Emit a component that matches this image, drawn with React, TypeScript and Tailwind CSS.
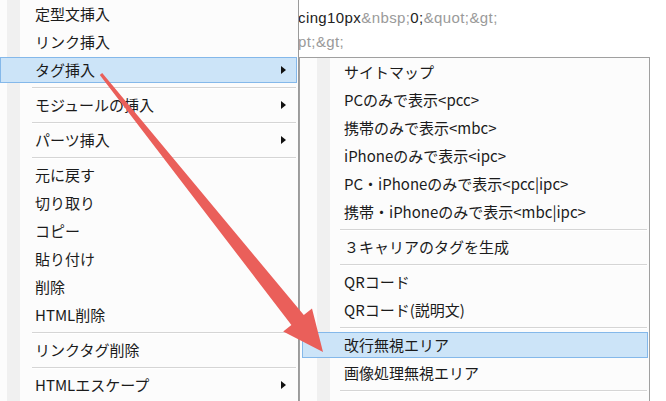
import React from "react";

type Row =
  | { kind: "item"; label: string; sub?: boolean; active?: boolean }
  | { kind: "sep" };

const mainRows: Row[] = [
  { kind: "item", label: "定型文挿入" },
  { kind: "item", label: "リンク挿入" },
  { kind: "item", label: "タグ挿入", sub: true, active: true },
  { kind: "sep" },
  { kind: "item", label: "モジュールの挿入", sub: true },
  { kind: "sep" },
  { kind: "item", label: "パーツ挿入", sub: true },
  { kind: "sep" },
  { kind: "item", label: "元に戻す" },
  { kind: "item", label: "切り取り" },
  { kind: "item", label: "コピー" },
  { kind: "item", label: "貼り付け" },
  { kind: "item", label: "削除" },
  { kind: "item", label: "HTML削除" },
  { kind: "sep" },
  { kind: "item", label: "リンクタグ削除" },
  { kind: "sep" },
  { kind: "item", label: "HTMLエスケープ", sub: true },
];

const tagRows: Row[] = [
  { kind: "item", label: "サイトマップ" },
  { kind: "item", label: "PCのみで表示<pcc>" },
  { kind: "item", label: "携帯のみで表示<mbc>" },
  { kind: "item", label: "iPhoneのみで表示<ipc>" },
  { kind: "item", label: "PC・iPhoneのみで表示<pcc|ipc>" },
  { kind: "item", label: "携帯・iPhoneのみで表示<mbc|ipc>" },
  { kind: "sep" },
  { kind: "item", label: "３キャリアのタグを生成" },
  { kind: "sep" },
  { kind: "item", label: "QRコード" },
  { kind: "item", label: "QRコード(説明文)" },
  { kind: "sep" },
  { kind: "item", label: "改行無視エリア", active: true },
  { kind: "item", label: "画像処理無視エリア" },
  { kind: "sep" },
  { kind: "item", label: "コメント挿入" },
];

function SubArrow() {
  return (
    <span className="ml-auto block w-0 h-0 border-y-[4px] border-y-transparent border-l-[5px] border-l-[#111]" />
  );
}

function MainMenu() {
  return (
    <div className="w-[299px] shrink-0 h-full border-r border-[#9a9a9a] bg-[linear-gradient(to_right,#fcfcfc_7px,#f0f0f0_7px,#f0f0f0_20px,#fcfcfc_20px)]">
      {mainRows.map((r, i) =>
        r.kind === "sep" ? (
          <div key={i} className="h-[7px] flex items-center pl-[32px] pr-[2px]">
            <div className="w-full border-t border-[#d5d5d5] border-b border-b-white" />
          </div>
        ) : (
          <div key={i} className="h-[28px] py-px pr-px">
            <div
              className={`h-full flex items-center pl-[34px] pr-[10px] border ${
                r.active ? "border-[#84b8ea] bg-[#cce4f8]" : "border-transparent"
              }`}
            >
              <span>{r.label}</span>
              {r.sub && <SubArrow />}
            </div>
          </div>
        )
      )}
    </div>
  );
}

function TagMenu() {
  return (
    <div className="w-[351px] shrink-0 border border-[#a0a0a0] bg-[linear-gradient(to_right,#fcfcfc_17px,#f0f0f0_17px,#f0f0f0_30px,#fcfcfc_30px)]">
      {tagRows.map((r, i) =>
        r.kind === "sep" ? (
          <div key={i} className="h-[7px] flex items-center pl-[40px] pr-[2px]">
            <div className="w-full border-t border-[#d5d5d5] border-b border-b-white" />
          </div>
        ) : (
          <div key={i} className="h-[28px] py-px pl-[2px] pr-[1px]">
            <div
              className={`h-full flex items-center pl-[41px] border ${
                r.active ? "border-[#84b8ea] bg-[#cce4f8]" : "border-transparent"
              }`}
            >
              <span className="whitespace-pre">{r.label}</span>
            </div>
          </div>
        )
      )}
    </div>
  );
}

export default function App() {
  return (
    <div className="relative w-[666px] h-[401px] overflow-hidden bg-white flex text-[15px] text-[#1b1b1b] font-['Meiryo_UI','Noto_Sans_CJK_JP',sans-serif]">
      <MainMenu />

      <div className="flex-1 min-w-0 flex flex-col">
        {/* underlying editor text */}
        <div className="h-[57px] shrink-0 pt-[6px] overflow-hidden whitespace-nowrap text-[15px] leading-[24px] tracking-[0.4px] font-['Liberation_Sans',sans-serif]">
          <div className="-ml-[1px]">
            <span className="text-[#222]">cing10px</span>
            <span className="text-[#9a9a9a]">&amp;nbsp;</span>
            <span className="text-[#222]">0;</span>
            <span className="text-[#9a9a9a]">&amp;quot;&amp;gt;</span>
          </div>
          <div className="-ml-[1px] text-[#9a9a9a]">pt;&amp;gt;</div>
        </div>
        <TagMenu />
      </div>

      {/* red annotation arrow */}
      <svg
        className="absolute inset-0 pointer-events-none"
        width="666"
        height="401"
        viewBox="0 0 666 401"
      >
        <polygon
          points="102.2,73.1 303.8,315 312,308.5 323,352 283.2,331.5 291.4,325 99.8,74.9"
          fill="#ea5f5a"
        />
      </svg>
    </div>
  );
}
